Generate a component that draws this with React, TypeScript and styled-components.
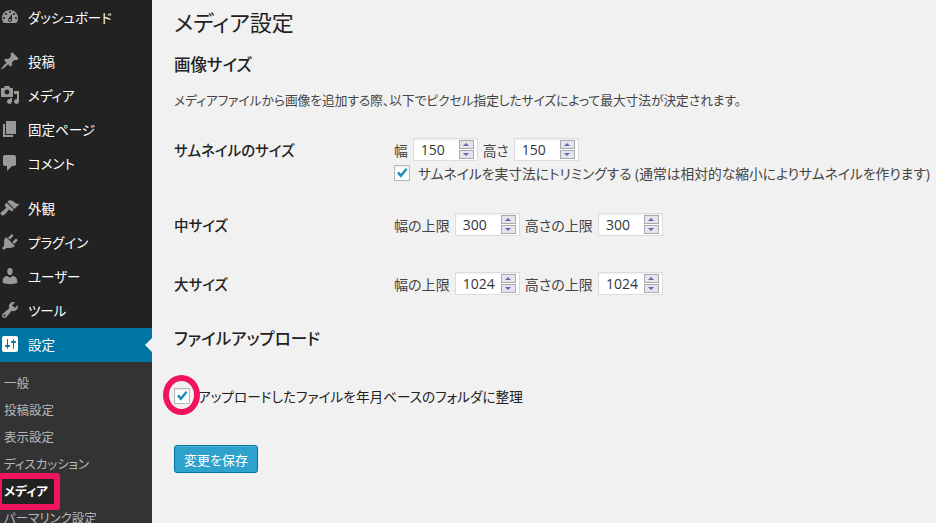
import React from 'react'
import styled, { createGlobalStyle } from 'styled-components'

const GlobalStyle = createGlobalStyle`
  html, body {
    margin: 0;
    padding: 0;
    background: #f1f1f1;
    overflow: hidden;
  }
  * {
    box-sizing: border-box;
  }
`

const Page = styled.div`
  display: flex;
  width: 936px;
  height: 523px;
  overflow: hidden;
  font-family: 'Open Sans', 'Noto Sans CJK JP', sans-serif;
  font-feature-settings: 'palt';
  font-size: 13.75px;
  color: #444;
`

const Sidebar = styled.nav`
  flex: 0 0 152px;
  height: 523px;
  background: #222;
  padding-top: 1px;
`

const MenuGroup = styled.div<{ $gap: number }>`
  margin-bottom: ${({ $gap }) => $gap}px;
`

const MenuItem = styled.div<{ $active?: boolean }>`
  position: relative;
  display: flex;
  align-items: center;
  gap: 8px;
  height: 34px;
  padding-bottom: 2px;
  color: #fff;
  font-size: 13.5px;
  background: ${({ $active }) => ($active ? '#0074a2' : 'transparent')};

  svg {
    flex: 0 0 20px;
    fill: ${({ $active }) => ($active ? '#fff' : '#999')};
  }
`

const ActiveArrow = styled.span`
  position: absolute;
  right: 0;
  top: 10px;
  border: 7px solid transparent;
  border-left: 0;
  border-right-color: #f1f1f1;
`

const SubMenu = styled.div`
  background: #333;
  padding-top: 7px;
  height: 161px;
`

const SubItem = styled.div<{ $current?: boolean }>`
  position: relative;
  display: flex;
  align-items: center;
  height: 27px;
  padding-left: 4px;
  font-size: 12.5px;
  color: ${({ $current }) => ($current ? '#fff' : '#b4b9be')};
  font-weight: ${({ $current }) => ($current ? 700 : 400)};
  z-index: ${({ $current }) => ($current ? 1 : 0)};
`

const MarkerBox = styled.span`
  position: absolute;
  left: 0;
  top: -4px;
  width: 60px;
  height: 37px;
  border: 6px solid #f0145c;
  border-left-width: 2px;
  border-radius: 0 3px 3px 0;
  background: #222;
  z-index: -1;
`

const Content = styled.main`
  flex: 1;
  padding-left: 22px;
  min-width: 0;
`

const Title = styled.h1`
  margin: 7px 0 0;
  height: 30px;
  line-height: 30px;
  font-size: 22px;
  font-weight: 400;
  color: #222;
`

const SectionTitle = styled.h3<{ $top: number }>`
  margin: ${({ $top }) => $top}px 0 0;
  height: 24px;
  line-height: 24px;
  font-size: 16.5px;
  font-weight: 500;
  color: #222;
`

const Description = styled.p`
  margin: 13px 0 0;
  height: 20px;
  line-height: 20px;
  font-size: 12.7px;
  white-space: nowrap;
`

const FormRow = styled.div<{ $top: number }>`
  display: grid;
  grid-template-columns: 220px 1fr;
  align-items: start;
  margin-top: ${({ $top }) => $top}px;
  white-space: nowrap;
`

const RowLabel = styled.div`
  font-size: 14.5px;
  font-weight: 500;
  color: #222;
  line-height: 26px;
`

const Fields = styled.div<{ $limits?: boolean }>`
  display: flex;
  align-items: center;
  gap: 5px;
  height: 23px;
  font-size: ${({ $limits }) => ($limits ? '14.05px' : 'inherit')};
`

const CheckRow = styled.label`
  display: flex;
  align-items: center;
  gap: 8px;
  height: 16px;
  margin-top: 4px;
`

const Box = styled.span`
  position: relative;
  display: inline-flex;
  align-items: center;
  justify-content: center;
  flex: 0 0 16px;
  width: 16px;
  height: 16px;
  background: #fff;
  border: 1px solid #b4b9be;
  box-shadow: inset 0 1px 2px rgba(0, 0, 0, 0.1);

  svg {
    fill: #1e8cbe;
  }
`

const Ring = styled.span`
  position: absolute;
  left: -12px;
  top: -14px;
  width: 37px;
  height: 40px;
  border: 6px solid #f0145c;
  border-radius: 50%;
`

const NumberBox = styled.div`
  display: flex;
  align-items: center;
  justify-content: space-between;
  width: 65px;
  height: 23px;
  background: #fff;
  border: 1px solid #ddd;
  box-shadow: inset 0 1px 2px rgba(0, 0, 0, 0.07);
  padding: 0 3px 0 7px;
  font-size: 14px;
  color: #32373c;
`

const Spinner = styled.div`
  display: flex;
  flex-direction: column;
  gap: 1px;
  width: 15px;
`

const SpinButton = styled.span<{ $down?: boolean }>`
  display: flex;
  align-items: center;
  justify-content: center;
  height: 9px;
  background: #e4e4ea;
  border: 1px solid #a9a9b0;

  &::after {
    content: '';
    border-left: 3px solid transparent;
    border-right: 3px solid transparent;
    ${({ $down }) => ($down ? 'border-top: 3px solid #5a6bb0;' : 'border-bottom: 3px solid #5a6bb0;')}
  }
`

const UploadRow = styled.label`
  display: flex;
  align-items: center;
  gap: 8px;
  height: 16px;
  margin-top: 37px;
  font-size: 13.65px;
  color: #222;
`

const SaveButton = styled.button`
  display: block;
  width: 84px;
  height: 28px;
  margin-top: 41px;
  padding: 0;
  background: #2ea2cc;
  border: 1px solid #0074a2;
  border-radius: 3px;
  box-shadow: inset 0 1px 0 rgba(120, 200, 230, 0.5);
  color: #fff;
  font-family: inherit;
  font-feature-settings: inherit;
  font-size: 13px;
`

const icons = {
  dashboard:
    'M3.76 16h12.48c1.1-1.37 1.76-3.11 1.76-5 0-4.42-3.58-8-8-8s-8 3.58-8 8c0 1.89.66 3.63 1.76 5zM10 4c.55 0 1 .45 1 1s-.45 1-1 1-1-.45-1-1 .45-1 1-1zM6 6c.55 0 1 .45 1 1s-.45 1-1 1-1-.45-1-1 .45-1 1-1zm8 0c.55 0 1 .45 1 1s-.45 1-1 1-1-.45-1-1 .45-1 1-1zm-5.37 5.55L12 7v6c0 1.1-.9 2-2 2s-2-.9-2-2c0-.57.24-1.08.63-1.45zM4 10c.55 0 1 .45 1 1s-.45 1-1 1-1-.45-1-1 .45-1 1-1zm12 0c.55 0 1 .45 1 1s-.45 1-1 1-1-.45-1-1 .45-1 1-1zm-5 3c0-.55-.45-1-1-1s-1 .45-1 1 .45 1 1 1 1-.45 1-1z',
  post: 'M10.44 3.02l1.82-1.82 6.36 6.35-1.83 1.82c-1.05-.68-2.48-.57-3.41.36l-.75.75c-.92.93-1.04 2.35-.35 3.41l-1.83 1.82-2.41-2.41-2.8 2.79c-.42.42-3.38 2.71-3.8 2.29s1.86-3.39 2.28-3.81l2.79-2.79L4.1 9.36l1.83-1.82c1.05.69 2.48.57 3.4-.36l.75-.75c.93-.92 1.05-2.35.36-3.41z',
  media:
    'M13 11V4c0-.55-.45-1-1-1h-1.67L9 1H5L3.67 3H2c-.55 0-1 .45-1 1v7c0 .55.45 1 1 1h10c.55 0 1-.45 1-1zM7 4.5c1.38 0 2.5 1.12 2.5 2.5S8.38 9.5 7 9.5 4.5 8.38 4.5 7 5.62 4.5 7 4.5zM14 6h5v10.5c0 1.38-1.12 2.5-2.5 2.5S14 17.88 14 16.5s1.12-2.5 2.5-2.5c.17 0 .34.02.5.05V9h-3V6zm-4 8.05V13h2v3.5c0 1.38-1.12 2.5-2.5 2.5S7 17.88 7 16.5 8.12 14 9.5 14c.17 0 .34.02.5.05z',
  page: 'M6 15V2h10v13H6zm-1 1h8v2H3V5h2v11z',
  comments:
    'M5 2h9c1.1 0 2 .9 2 2v7c0 1.1-.9 2-2 2h-2l-5 5v-5H5c-1.1 0-2-.9-2-2V4c0-1.1.9-2 2-2z',
  appearance:
    'M14.48 11.06L7.41 3.99l1.5-1.5c.5-.56 2.3-.47 3.51.32 1.21.8 1.43 1.28 2.91 2.1 1.18.64 2.45 1.26 4.45.85zm-.71.71L6.7 4.7 4.93 6.47c-.39.39-.39 1.02 0 1.41l1.06 1.06c.39.39.39 1.03 0 1.42-.6.6-1.43 1.11-2.21 1.69-.35.26-.7.53-1.01.84C1.43 13.23.5 14.58.5 15.5c0 .93.93 1.93 1.92 1.93.92 0 2.27-.93 3.61-2.27.3-.3.58-.65.84-1 .58-.78 1.09-1.61 1.69-2.21.39-.39 1.02-.39 1.41 0l1.06 1.06c.39.39 1.02.39 1.41 0z',
  plugins:
    'M13.11 4.36L9.87 7.6 8 5.73l3.24-3.24c.35-.34 1.05-.2 1.56.32.52.51.66 1.21.31 1.55zm-8 1.77l.91-1.12 9.01 9.01-1.19.84c-.71.71-2.63 1.16-3.82 1.16H6.14L4.9 17.26c-.59.59-1.54.59-2.12 0-.59-.58-.59-1.53 0-2.12l1.24-1.24v-3.88c0-1.13.4-3.19 1.09-3.89zm7.26 3.97l3.24-3.24c.34-.35 1.04-.21 1.55.31.52.51.66 1.21.31 1.55l-3.24 3.25z',
  users:
    'M10 9.25c-2.27 0-2.73-3.44-2.73-3.44C7 4.02 7.82 2 9.97 2c2.16 0 2.98 2.02 2.71 3.81 0 0-.41 3.44-2.68 3.44zm0 2.57L12.72 10c2.39 0 4.52 2.33 4.52 4.53v2.49s-3.65 1.13-7.24 1.13c-3.65 0-7.24-1.13-7.24-1.13v-2.49c0-2.25 1.94-4.53 4.47-4.53z',
  tools:
    'M16.68 9.77c-1.34 1.34-3.3 1.67-4.95.99l-5.41 6.52c-.99.99-2.59.99-3.58 0s-.99-2.59 0-3.57l6.52-5.42c-.68-1.65-.35-3.61.99-4.95 1.28-1.28 3.12-1.62 4.72-1.06l-2.89 2.89 2.82 2.82 2.86-2.87c.53 1.58.18 3.39-1.08 4.65zM3.81 16.21c.4.39 1.04.39 1.43 0 .4-.4.4-1.04 0-1.43-.39-.4-1.03-.4-1.43 0-.39.39-.39 1.03 0 1.43z',
  settings:
    'M18 16V4c0-1.1-.9-2-2-2H4c-1.1 0-2 .9-2 2v12c0 1.1.9 2 2 2h12c1.1 0 2-.9 2-2zM8 11h1c.55 0 1 .45 1 1s-.45 1-1 1H8v1.5c0 .28-.22.5-.5.5s-.5-.22-.5-.5V13H6c-.55 0-1-.45-1-1s.45-1 1-1h1V5.5c0-.28.22-.5.5-.5s.5.22.5.5V11zm5-2h-1c-.55 0-1-.45-1-1s.45-1 1-1h1V5.5c0-.28.22-.5.5-.5s.5.22.5.5V7h1c.55 0 1 .45 1 1s-.45 1-1 1h-1v5.5c0 .28-.22.5-.5.5s-.5-.22-.5-.5V9z',
}

const Icon = ({ name }: { name: keyof typeof icons }) => (
  <svg width="20" height="20" viewBox="0 0 20 20">
    <path d={icons[name]} />
  </svg>
)

const CheckMark = () => (
  <svg width="14" height="14" viewBox="0 0 14 14">
    <path d="M2 7.2l1.9-1.7 1.9 2.2L10.8 2l1.7 1.4-6.6 8.3z" />
  </svg>
)

const NumberField = ({ value }: { value: string }) => (
  <NumberBox>
    <span>{value}</span>
    <Spinner>
      <SpinButton />
      <SpinButton $down />
    </Spinner>
  </NumberBox>
)

const subItems = ['一般', '投稿設定', '表示設定', 'ディスカッション', 'メディア', 'パーマリンク設定']

export default function App() {
  return (
    <Page>
      <GlobalStyle />
      <Sidebar>
        <MenuGroup $gap={10}>
          <MenuItem>
            <Icon name="dashboard" />
            ダッシュボード
          </MenuItem>
        </MenuGroup>
        <MenuGroup $gap={11}>
          <MenuItem>
            <Icon name="post" />
            投稿
          </MenuItem>
          <MenuItem>
            <Icon name="media" />
            メディア
          </MenuItem>
          <MenuItem>
            <Icon name="page" />
            固定ページ
          </MenuItem>
          <MenuItem>
            <Icon name="comments" />
            コメント
          </MenuItem>
        </MenuGroup>
        <MenuItem>
          <Icon name="appearance" />
          外観
        </MenuItem>
        <MenuItem>
          <Icon name="plugins" />
          プラグイン
        </MenuItem>
        <MenuItem>
          <Icon name="users" />
          ユーザー
        </MenuItem>
        <MenuItem>
          <Icon name="tools" />
          ツール
        </MenuItem>
        <MenuItem $active>
          <Icon name="settings" />
          設定
          <ActiveArrow />
        </MenuItem>
        <SubMenu>
          {subItems.map((item) => (
            <SubItem key={item} $current={item === 'メディア'}>
              {item === 'メディア' && <MarkerBox />}
              {item}
            </SubItem>
          ))}
        </SubMenu>
      </Sidebar>

      <Content>
        <Title>メディア設定</Title>
        <SectionTitle $top={16}>画像サイズ</SectionTitle>
        <Description>メディアファイルから画像を追加する際、以下でピクセル指定したサイズによって最大寸法が決定されます。</Description>

        <FormRow $top={28}>
          <RowLabel>サムネイルのサイズ</RowLabel>
          <div>
            <Fields>
              幅<NumberField value="150" />
              高さ<NumberField value="150" />
            </Fields>
            <CheckRow>
              <Box>
                <CheckMark />
              </Box>
              サムネイルを実寸法にトリミングする (通常は相対的な縮小によりサムネイルを作ります)
            </CheckRow>
          </div>
        </FormRow>

        <FormRow $top={32}>
          <RowLabel>中サイズ</RowLabel>
          <Fields $limits>
            幅の上限<NumberField value="300" />
            高さの上限<NumberField value="300" />
          </Fields>
        </FormRow>

        <FormRow $top={33}>
          <RowLabel>大サイズ</RowLabel>
          <Fields $limits>
            幅の上限<NumberField value="1024" />
            高さの上限<NumberField value="1024" />
          </Fields>
        </FormRow>

        <SectionTitle $top={29}>ファイルアップロード</SectionTitle>
        <UploadRow>
          <Box>
            <CheckMark />
            <Ring />
          </Box>
          アップロードしたファイルを年月ベースのフォルダに整理
        </UploadRow>
        <SaveButton>変更を保存</SaveButton>
      </Content>
    </Page>
  )
}
